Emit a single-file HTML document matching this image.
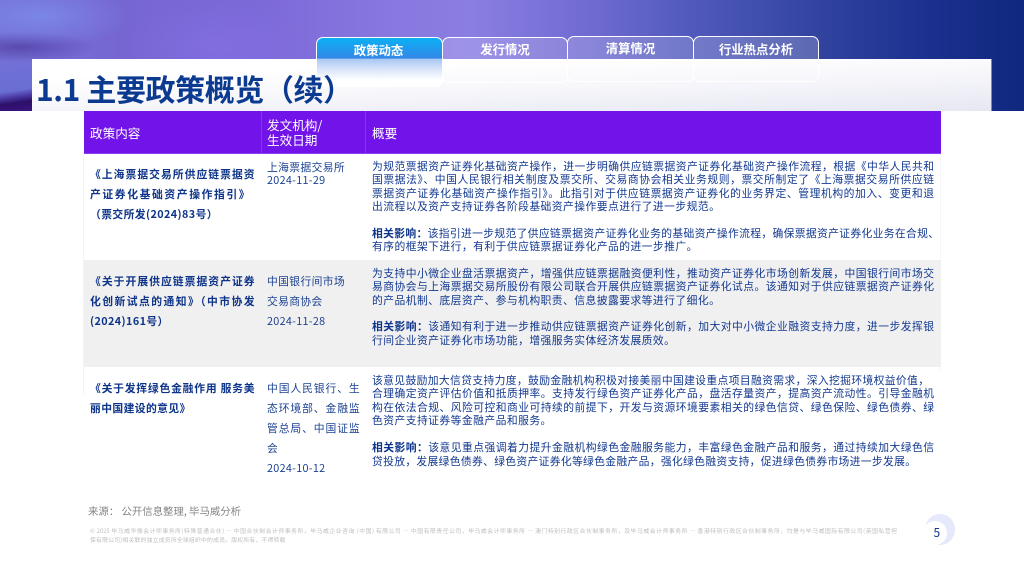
<!DOCTYPE html>
<html lang="zh"><head><meta charset="utf-8"><title>1.1 主要政策概览（续）</title>
<style>
html,body{margin:0;padding:0;background:#fff}
#p{position:relative;width:1024px;height:576px;overflow:hidden;background:#fff;font-family:"Noto Sans CJK SC","Liberation Sans",sans-serif;color:#12388f}
#p div{position:absolute;box-sizing:border-box}
.l{font-size:10.8px;line-height:14px;height:14px;left:372px;width:562px;white-space:nowrap;letter-spacing:.44px}
.j{text-align:justify;text-align-last:justify;letter-spacing:0}
.c1{font-size:10.8px;font-weight:700;line-height:14px;height:14px;left:90px;width:165px;white-space:nowrap;color:#0e3489;letter-spacing:.4px}
.c2{font-size:10.8px;line-height:14px;height:14px;left:267px;width:93px;white-space:nowrap;letter-spacing:.3px;color:#1c4291}
.t{border:1.5px solid #fff;border-radius:7px;color:#fff;font-size:12.4px;font-weight:700;text-align:center;line-height:22px}
b{font-weight:700;color:#0e3489}
</style></head><body><div id="p">
<div style="left:0;top:0;width:1024px;height:111px;background:linear-gradient(90deg,#7672d6 0%,#7666d2 12%,#7c69d8 25%,#8877df 38%,#8a7ee2 46%,#6f6ad0 58%,#4f59bb 68%,#32439f 80%,#1c3190 90%,#10287f 100%)"></div>
<div style="left:0;top:0;width:320px;height:111px;background:radial-gradient(ellipse 90px 30px at 42px 16px,rgba(125,150,240,.6),transparent),radial-gradient(ellipse 75px 16px at 20px 47px,rgba(70,48,150,.6),transparent),radial-gradient(ellipse 90px 45px at 215px 45px,rgba(145,120,240,.35),transparent)"></div>
<div style="left:0;top:58px;width:33px;height:53px;background:linear-gradient(172deg,rgba(110,100,210,0) 0%,#6e6fd6 30%,#6a6ed2 60%,#4a35a0 72%,#2c1068 82%,#3c1482 100%)"></div>
<div style="left:32px;top:59px;width:960px;height:52px;background:linear-gradient(178deg,#fff 22%,#f7f7fb 55%,#e5e7f2 100%)"></div>
<div style="left:991px;top:59px;width:1px;height:52px;background:#7d88b8"></div>
<div style="left:316px;top:37px;width:127px;height:50px;border:1.5px solid #fff;border-radius:7px;background:linear-gradient(180deg,#0cb0f4 0%,#3388e8 42%,#a9c8f3 44%,#dbe6fa 66%,#fff 88%)"></div>
<div class="t" style="left:315px;top:37px;width:127px;height:24px;border-color:transparent;background:none;line-height:24px">政策动态</div>
<div class="t" style="left:442px;top:37px;width:126px;height:46px;background:linear-gradient(180deg,rgba(255,255,255,.16),rgba(255,255,255,.16) 48%,transparent 48%)">发行情况</div>
<div class="t" style="left:567px;top:36px;width:127px;height:46px;line-height:22px;background:linear-gradient(180deg,rgba(255,255,255,.18),rgba(255,255,255,.18) 50%,transparent 50%)">清算情况</div>
<div class="t" style="left:693px;top:35.5px;width:126px;height:46px;line-height:25px;background:linear-gradient(180deg,rgba(255,255,255,.2),rgba(255,255,255,.2) 51%,transparent 51%)">行业热点分析</div>
<div style="left:36px;top:69px;font-size:30px;letter-spacing:-.4px;line-height:38px;font-weight:700;color:#0b3a90;white-space:nowrap">1.1 主要政策概览（续）</div>

<div style="left:83px;top:154px;width:1px;height:241px;background:#f3f3f7"></div>
<div style="left:940px;top:154px;width:1px;height:218px;background:#f6f6fa"></div>
<div style="left:84px;top:111px;width:856.5px;height:43px;background:#7213ea;border-bottom:1px solid #8a42ee"></div>
<div style="left:261px;top:111px;width:1px;height:42px;background:#8038ec"></div>
<div style="left:365px;top:111px;width:1px;height:42px;background:#8038ec"></div>
<div style="left:90px;top:124px;font-size:12.6px;line-height:18px;color:#fff;white-space:nowrap">政策内容</div>
<div style="left:267px;top:117px;font-size:12.6px;line-height:15px;color:#fff;white-space:nowrap">发文机构/<br>生效日期</div>
<div style="left:372px;top:124px;font-size:12.6px;line-height:18px;color:#fff;white-space:nowrap">概要</div>
<div style="left:84px;top:260px;width:856.5px;height:107px;background:#f0f0f0"></div>

<div class="c1 j" style="top:167px">《上海票据交易所供应链票据资</div>
<div class="c1 j" style="top:187px;width:160px">产证券化基础资产操作指引》</div>
<div class="c1" style="top:207px">（票交所发(2024)83号）</div>
<div class="c2 j" style="top:160px;width:78px">上海票据交易所</div>
<div class="c2" style="top:173px">2024-11-29</div>

<div class="c1 j" style="top:274px">《关于开展供应链票据资产证券</div>
<div class="c1 j" style="top:294px">化创新试点的通知》（中市协发</div>
<div class="c1" style="top:314px">(2024)161号）</div>
<div class="c2 j" style="top:274px;width:78px">中国银行间市场</div>
<div class="c2" style="top:294px">交易商协会</div>
<div class="c2" style="top:314px">2024-11-28</div>

<div class="c1 j" style="top:381px">《关于发挥绿色金融作用 服务美</div>
<div class="c1" style="top:401px">丽中国建设的意见》</div>
<div class="c2 j" style="top:381px">中国人民银行、生</div>
<div class="c2 j" style="top:401px">态环境部、金融监</div>
<div class="c2 j" style="top:421px">管总局、中国证监</div>
<div class="c2" style="top:441px">会</div>
<div class="c2" style="top:461px">2024-10-12</div>

<div class="l j" style="top:159px">为规范票据资产证券化基础资产操作，进一步明确供应链票据资产证券化基础资产操作流程，根据《中华人民共和</div>
<div class="l j" style="top:172px">国票据法》、中国人民银行相关制度及票交所、交易商协会相关业务规则，票交所制定了《上海票据交易所供应链</div>
<div class="l j" style="top:186px">票据资产证券化基础资产操作指引》。此指引对于供应链票据资产证券化的业务界定、管理机构的加入、变更和退</div>
<div class="l" style="top:199px">出流程以及资产支持证券各阶段基础资产操作要点进行了进一步规范。</div>
<div class="l j" style="top:226px;width:567px"><b>相关影响：</b>该指引进一步规范了供应链票据资产证券化业务的基础资产操作流程，确保票据资产证券化业务在合规、</div>
<div class="l" style="top:239px">有序的框架下进行，有利于供应链票据证券化产品的进一步推广。</div>

<div class="l j" style="top:266px">为支持中小微企业盘活票据资产，增强供应链票据融资便利性，推动资产证券化市场创新发展，中国银行间市场交</div>
<div class="l j" style="top:279px">易商协会与上海票据交易所股份有限公司联合开展供应链票据资产证券化试点。该通知对于供应链票据资产证券化</div>
<div class="l" style="top:293px">的产品机制、底层资产、参与机构职责、信息披露要求等进行了细化。</div>
<div class="l j" style="top:319px"><b>相关影响：</b>该通知有利于进一步推动供应链票据资产证券化创新，加大对中小微企业融资支持力度，进一步发挥银</div>
<div class="l" style="top:333px">行间企业资产证券化市场功能，增强服务实体经济发展质效。</div>

<div class="l j" style="top:373px;width:557px">该意见鼓励加大信贷支持力度，鼓励金融机构积极对接美丽中国建设重点项目融资需求，深入挖掘环境权益价值，</div>
<div class="l j" style="top:386px">合理确定资产评估价值和抵质押率。支持发行绿色资产证券化产品，盘活存量资产，提高资产流动性。引导金融机</div>
<div class="l j" style="top:400px">构在依法合规、风险可控和商业可持续的前提下，开发与资源环境要素相关的绿色信贷、绿色保险、绿色债券、绿</div>
<div class="l" style="top:413px">色资产支持证券等金融产品和服务。</div>
<div class="l j" style="top:440px"><b>相关影响：</b>该意见重点强调着力提升金融机构绿色金融服务能力，丰富绿色金融产品和服务，通过持续加大绿色信</div>
<div class="l j" style="top:454px;width:544px">贷投放，发展绿色债券、绿色资产证券化等绿色金融产品，强化绿色融资支持，促进绿色债券市场进一步发展。</div>

<div style="left:88px;top:504px;font-size:10.4px;line-height:14px;color:#858585;white-space:nowrap">来源： 公开信息整理, 毕马威分析</div>
<div style="left:90px;top:527px;width:807px;font-size:5.8px;line-height:7px;height:7px;color:#bdbdbd;white-space:nowrap;text-align:justify;text-align-last:justify">© 2025 毕马威华振会计师事务所(特殊普通合伙) — 中国合伙制会计师事务所，毕马威企业咨询 (中国) 有限公司 — 中国有限责任公司，毕马威会计师事务所 — 澳门特别行政区合伙制事务所，及毕马威会计师事务所 — 香港特别行政区合伙制事务所，均是与毕马威国际有限公司(英国私营担</div>
<div style="left:90px;top:536px;font-size:5.8px;line-height:7px;height:7px;color:#bdbdbd;white-space:nowrap;letter-spacing:.25px">保有限公司)相关联的独立成员所全球组织中的成员。版权所有，不得转载</div>

<div style="left:925px;top:514px;width:30px;height:31px;border-radius:50%;background:#e6e8fb"></div>
<div style="left:923px;top:521px;width:24px;height:24px;border-radius:50%;background:#fff"></div>
<div style="left:933.5px;top:524px;font-size:12px;line-height:18px;color:#12388f">5</div>
</div></body></html>
